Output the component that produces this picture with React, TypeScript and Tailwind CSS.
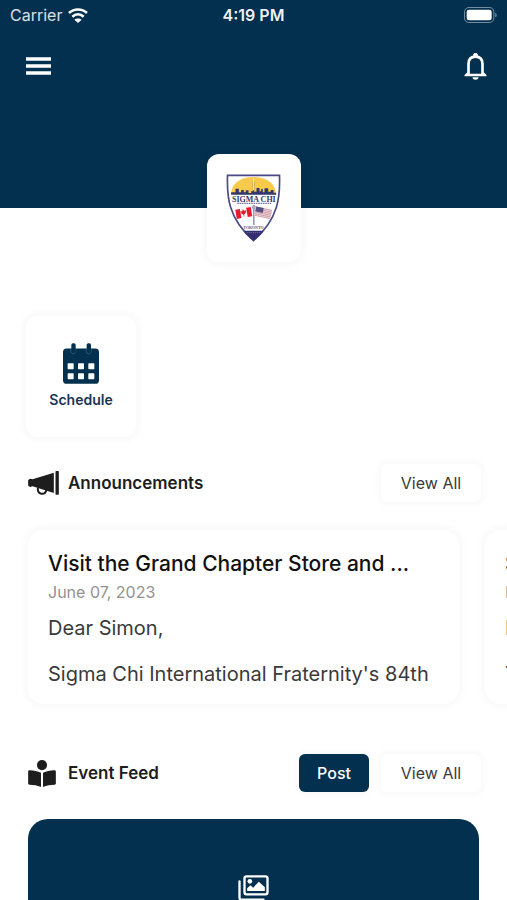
import type { ReactNode } from "react";

const announcements = [
  {
    title: "Visit the Grand Chapter Store and ...",
    date: "June 07, 2023",
    greeting: "Dear Simon,",
    body: "Sigma Chi International Fraternity's 84th",
  },
  { title: "S", date: "M", greeting: "D", body: "T" },
];

function WifiIcon() {
  return (
    <svg viewBox="0 0 60 45" className="h-[15px] w-5" aria-hidden="true">
      <g fill="none" stroke="white" strokeWidth="8">
        <path d="M3 15C18 1 42 1 57 15" />
        <path d="M13 26C23 17 37 17 47 26" />
      </g>
      <path d="M30 45 19 35C25 30 35 30 41 35Z" fill="white" />
    </svg>
  );
}

function BatteryIcon() {
  return (
    <svg viewBox="0 0 99 48" className="h-4 w-[33px]" aria-hidden="true">
      <rect x="1.5" y="1.5" width="88" height="45" rx="13" fill="none" stroke="white" strokeOpacity="0.45" strokeWidth="3" />
      <rect x="8" y="8" width="75" height="32" rx="7" fill="white" />
      <path d="M94 17C99 19 99 29 94 31Z" fill="white" fillOpacity="0.5" />
    </svg>
  );
}

function MenuIcon() {
  return (
    <svg viewBox="0 0 75 54" className="h-[18px] w-[25px]" aria-hidden="true">
      <path d="M0 6H75M0 27H75M0 48H75" stroke="white" strokeWidth="10" />
    </svg>
  );
}

function BellIcon() {
  return (
    <svg viewBox="0 0 68 84" className="h-7 w-[23px]" aria-hidden="true">
      <path d="M13 66V36C13 22 21 14 34 14S55 22 55 36V66" fill="none" stroke="white" strokeWidth="8" />
      <path d="M27 13V9C27 1 41 1 41 9V13Z" fill="white" />
      <path d="M1 73V69L10 60V65H58V60L67 69V73Z" fill="white" />
      <path d="M25 76H43C43 86 25 86 25 76Z" fill="white" />
    </svg>
  );
}

function CalendarIcon() {
  return (
    <svg viewBox="0 0 108 122" className="h-[41px] w-9" aria-hidden="true">
      <rect y="16" width="108" height="106" rx="11" fill="#03304f" />
      <path d="M24 16V25C24 34 38 34 38 25V16M70 16V25C70 34 84 34 84 25V16" fill="none" stroke="#5d7990" strokeWidth="2" />
      <rect x="25" width="13" height="30" rx="5" fill="#03304f" />
      <rect x="71" width="13" height="30" rx="5" fill="#03304f" />
      <g fill="white">
        <rect x="14" y="60" width="18" height="18" rx="2" />
        <rect x="45" y="60" width="18" height="18" rx="2" />
        <rect x="76" y="60" width="18" height="18" rx="2" />
        <rect x="14" y="90" width="18" height="18" rx="2" />
        <rect x="45" y="90" width="18" height="18" rx="2" />
        <rect x="76" y="90" width="18" height="18" rx="2" />
      </g>
    </svg>
  );
}

function MegaphoneIcon() {
  return (
    <svg viewBox="0 0 92 72" className="h-6 w-[31px]" aria-hidden="true">
      <path d="M0 27 6 23 13 25 77 5V66L13 46 6 48 0 44Z" fill="#1d1d1d" />
      <path d="M29 50C27 72 50 74 55 57" fill="none" stroke="#1d1d1d" strokeWidth="6" />
      <rect x="82" width="10" height="71" rx="2" fill="#1d1d1d" />
    </svg>
  );
}

function ReaderIcon() {
  return (
    <svg viewBox="0 0 82 80" className="h-[27px] w-7" aria-hidden="true">
      <g fill="#1d1d1d">
        <circle cx="41" cy="15" r="15" />
        <path d="M38 38V80C27 75 16 73 4 73C1 73 0 72 0 69V34C0 31 2 30 5 30C17 31 28 33 38 38Z" />
        <path d="M44 38V80C55 75 66 73 78 73C81 73 82 72 82 69V34C82 31 80 30 77 30C65 31 54 33 44 38Z" />
      </g>
    </svg>
  );
}

function GalleryIcon() {
  return (
    <svg viewBox="0 0 92 78" className="h-[26px] w-[31px]" aria-hidden="true">
      <path d="M4 19V68C4 72 6 74 10 74H76" fill="none" stroke="white" strokeWidth="7" strokeLinecap="round" />
      <rect x="19" y="4" width="69" height="54" rx="6" fill="none" stroke="white" strokeWidth="7" />
      <circle cx="35" cy="19" r="7" fill="white" />
      <path d="M27 48V40L37 31 45 38 62 20 80 37V48Z" fill="white" />
    </svg>
  );
}

function Crest() {
  return (
    <svg viewBox="34 25 164 204" className="h-[68px] w-[55px]" role="img" aria-label="Sigma Chi Toronto">
      <path d="M38 29H194C196 90 193 158 116 225C39 158 36 90 38 29Z" fill="white" stroke="#4b4a86" strokeWidth="5" />
      <path d="M49 86C48 58 72 34 116 34S184 58 183 86Z" fill="#f8ca4b" />
      <path
        d="M49 87V80H62V69H72V80H79V73H87V80H93V74H101V82H109V77H114V48L116 33 118 48V78H125V67H134V77H139V70H144V80H149V68H160V78H168V73H176V81H184V87Z"
        fill="#33376f"
      />
      <path d="M116 36V74" stroke="#f7efd0" strokeWidth="3" />
      <text x="117" y="108" textAnchor="middle" fontFamily="Liberation Serif, serif" fontWeight="700" fontSize="24" fill="#38366f">
        SIGMA CHI
      </text>
      <path d="M67 113H169" stroke="#77769c" strokeWidth="4" strokeDasharray="5 2" />
      <path d="M117 118V178" stroke="#8585a5" strokeWidth="4" />
      <path d="M110 120H124L120 132H114Z" fill="#a8a8bd" />
      <g transform="rotate(-10 86 140)">
        <rect x="63" y="128" width="47" height="28" fill="white" />
        <rect x="63" y="128" width="14" height="28" fill="#e51b2d" />
        <rect x="96" y="128" width="14" height="28" fill="#e51b2d" />
        <path d="M86 130 89 136 95 135 92 143 87 147V153H85V147L80 143 77 135 83 136Z" fill="#e51b2d" />
      </g>
      <g transform="rotate(12 145 140)">
        <rect x="121" y="127" width="49" height="28" fill="#eddce1" />
        <path d="M121 129H170M121 134H170M121 139H170M121 144H170M121 149H170M121 154H170" stroke="#c78391" strokeWidth="2" />
        <rect x="121" y="127" width="23" height="15" fill="#514f83" />
      </g>
      <text x="116" y="189" textAnchor="middle" fontFamily="Liberation Serif, serif" fontWeight="700" fontSize="12" fill="#57557f">
        TORONTO
      </text>
      <path d="M87 195H146C138 206 128 216 116 225C104 216 95 206 87 195Z" fill="#332d71" />
      <path d="M96 201H136" stroke="#8b88b2" strokeWidth="2" strokeDasharray="4 2" />
    </svg>
  );
}

function SectionHeader({ icon, title, children }: { icon: ReactNode; title: string; children: ReactNode }) {
  return (
    <div className="flex items-center pr-[26px] pl-7">
      <span className="flex w-10 shrink-0">{icon}</span>
      <h2 className="flex-1 text-[17px] leading-6 font-semibold text-[#1d1d1d]">{title}</h2>
      <div className="flex gap-3">{children}</div>
    </div>
  );
}

function ViewAllButton() {
  return (
    <button
      type="button"
      className="h-[38px] w-[100px] rounded-md bg-white text-base text-[#3a3a3a] shadow-[0_0_4px_4px_rgba(0,0,0,0.02)]"
    >
      View All
    </button>
  );
}

export default function App() {
  return (
    <div className="flex h-screen flex-col overflow-hidden bg-white font-['Inter',sans-serif]">
      <header className="h-52 shrink-0 bg-[#03304f] text-white">
        <div className="grid h-[30px] grid-cols-3 items-center px-[10px] text-base">
          <span className="flex items-center gap-[6px] text-white/85">
            Carrier
            <WifiIcon />
          </span>
          <span className="text-center font-semibold text-white/95">4:19 PM</span>
          <span className="flex justify-end">
            <BatteryIcon />
          </span>
        </div>
        <nav className="flex h-[72px] items-center justify-between pr-5 pl-[26px]">
          <button type="button" aria-label="Menu">
            <MenuIcon />
          </button>
          <button type="button" aria-label="Notifications">
            <BellIcon />
          </button>
        </nav>
      </header>

      <main className="flex-1">
        <div className="relative mx-auto -mt-[54px] flex h-[108px] w-[94px] items-center justify-center rounded-xl bg-white shadow-[0_0_5px_5px_rgba(0,0,0,0.02)]">
          <Crest />
        </div>

        <div className="mt-[54px] px-[26px]">
          <button
            type="button"
            className="flex h-[121px] w-[110px] flex-col items-center justify-center gap-[6px] rounded-xl bg-white text-sm font-semibold text-[#1c3455] shadow-[0_0_5px_5px_rgba(0,0,0,0.02)]"
          >
            <CalendarIcon />
            Schedule
          </button>
        </div>

        <section className="mt-[27px]">
          <SectionHeader icon={<MegaphoneIcon />} title="Announcements">
            <ViewAllButton />
          </SectionHeader>
          <div className="flex gap-[26px] overflow-hidden px-7 pt-7 pb-6">
            {announcements.map((item) => (
              <article
                key={item.title}
                className="h-[174px] w-[431px] shrink-0 rounded-2xl bg-white px-5 pt-5 text-xl text-[#3a3a3a] shadow-[0_0_5px_5px_rgba(0,0,0,0.02)]"
              >
                <h3 className="text-[21px] leading-7 font-medium text-[#111111]">{item.title}</h3>
                <p className="text-base leading-7 text-[#929292]">{item.date}</p>
                <p className="mt-[10px] leading-6">{item.greeting}</p>
                <p className="mt-[22px] leading-6">{item.body}</p>
              </article>
            ))}
          </div>
        </section>

        <section className="mt-[26px]">
          <SectionHeader icon={<ReaderIcon />} title="Event Feed">
            <button
              type="button"
              className="h-[38px] w-[70px] rounded-md bg-[#03304f] text-base font-medium text-white shadow-[0_0_4px_4px_rgba(0,0,0,0.02)]"
            >
              Post
            </button>
            <ViewAllButton />
          </SectionHeader>
          <div className="mx-7 mt-[27px] flex h-[280px] justify-center rounded-[20px] bg-[#03304f] pt-14">
            <GalleryIcon />
          </div>
        </section>
      </main>
    </div>
  );
}
